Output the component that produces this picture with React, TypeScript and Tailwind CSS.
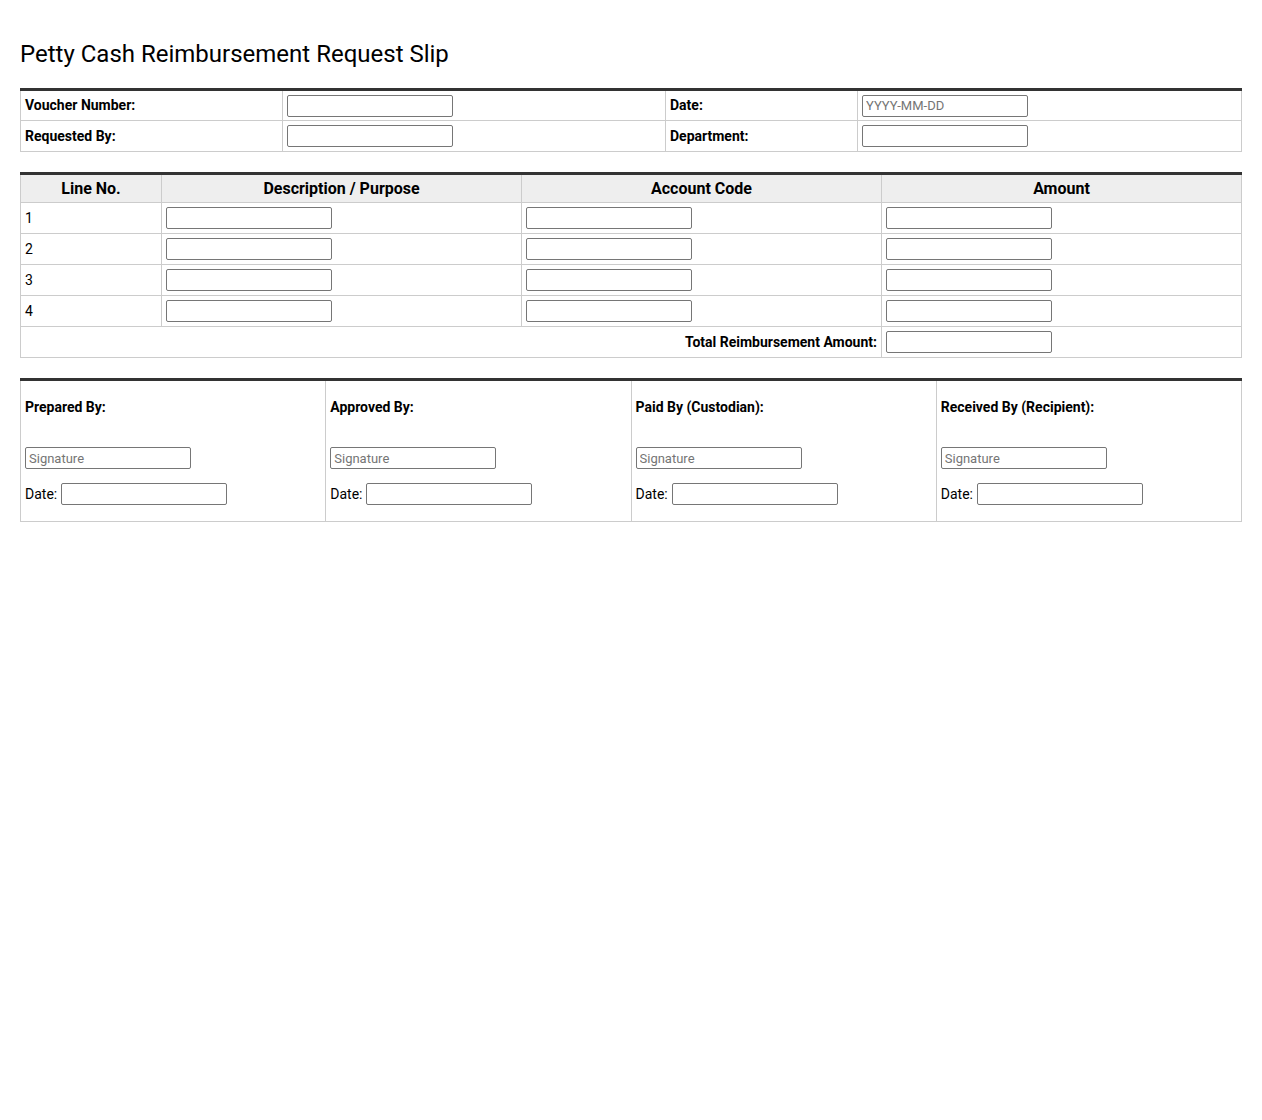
const inp = "h-[22px] w-[166px] rounded-[2px] border border-[#767676] bg-white px-[3px] text-[13px] text-black placeholder-[#757575] align-middle";

function Field({ placeholder }: { placeholder?: string }) {
  return <input className={inp} placeholder={placeholder} />;
}

export default function App() {
  const td = "border border-[#ccc] px-[4px] h-[31px] align-middle";
  const lines = ["1", "2", "3", "4"];
  const signers = ["Prepared By:", "Approved By:", "Paid By (Custodian):", "Received By (Recipient):"];
  return (
    <div className="min-h-[1120px] bg-white px-[20px] pt-[20px] text-[14px] text-black" style={{ fontFamily: "Roboto, 'Liberation Sans', sans-serif" }}>
      <h1 className="mb-[20px] pt-[20px] text-[24px] leading-[28px]">Petty Cash Reimbursement Request Slip</h1>

      <table className="w-full border-collapse border-t-[3px] border-t-[#333]">
        <colgroup>
          <col className="w-[262px]" />
          <col className="w-[383px]" />
          <col className="w-[192px]" />
          <col />
        </colgroup>
        <tbody>
          <tr>
            <td className={`${td} border-t-0 font-bold`}>Voucher Number:</td>
            <td className={`${td} border-t-0`}><Field /></td>
            <td className={`${td} border-t-0 font-bold`}>Date:</td>
            <td className={`${td} border-t-0`}><Field placeholder="YYYY-MM-DD" /></td>
          </tr>
          <tr>
            <td className={`${td} font-bold`}>Requested By:</td>
            <td className={td}><Field /></td>
            <td className={`${td} font-bold`}>Department:</td>
            <td className={td}><Field /></td>
          </tr>
        </tbody>
      </table>

      <table className="mt-[20px] w-full border-collapse border-t-[3px] border-t-[#333]">
        <colgroup>
          <col className="w-[141px]" />
          <col className="w-[360px]" />
          <col className="w-[360px]" />
          <col />
        </colgroup>
        <thead>
          <tr className="bg-[#eee] text-[16px] font-bold">
            <th className="h-[29px] border border-t-0 border-[#ccc]">Line No.</th>
            <th className="border border-t-0 border-[#ccc]">Description / Purpose</th>
            <th className="border border-t-0 border-[#ccc]">Account Code</th>
            <th className="border border-t-0 border-[#ccc]">Amount</th>
          </tr>
        </thead>
        <tbody>
          {lines.map((n) => (
            <tr key={n}>
              <td className={td}>{n}</td>
              <td className={td}><Field /></td>
              <td className={td}><Field /></td>
              <td className={td}><Field /></td>
            </tr>
          ))}
          <tr>
            <td colSpan={3} className={`${td} text-right font-bold`}>Total Reimbursement Amount:</td>
            <td className={td}><Field /></td>
          </tr>
        </tbody>
      </table>

      <table className="mt-[20px] w-full table-fixed border-collapse border-t-[3px] border-t-[#333]">
        <tbody>
          <tr>
            {signers.map((s) => (
              <td key={s} className="h-[142px] border border-t-0 border-[#ccc] px-[4px] align-top">
                <div className="mt-[18px] font-bold leading-[16px]">{s}</div>
                <div className="mt-[32px]"><Field placeholder="Signature" /></div>
                <div className="mt-[14px] flex items-center gap-[4px]">
                  <span>Date:</span>
                  <Field />
                </div>
              </td>
            ))}
          </tr>
        </tbody>
      </table>
    </div>
  );
}
